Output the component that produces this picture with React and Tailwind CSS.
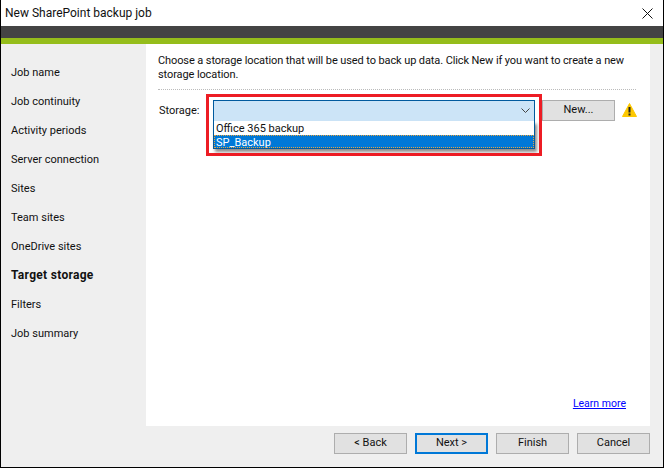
import React from 'react';

const STEPS = ['Job name', 'Job continuity', 'Activity periods', 'Server connection', 'Sites', 'Team sites', 'OneDrive sites', 'Target storage', 'Filters', 'Job summary'];

function WizardButton({ children, focused }) {
    return (
        <button className={`w-[73px] h-[21px] shrink-0 flex items-center justify-center bg-[#e1e1e1] text-[11px] text-[#111] ${focused ? 'border-2 border-[#0078d7]' : 'border border-[#adadad]'}`}>
            {children}
        </button>
    );
}

export default function App() {
    return (
        <div className="w-[664px] h-[468px] flex flex-col bg-white border-x border-b border-black overflow-hidden font-['Roboto',sans-serif] text-[11px] text-[#111]">
            <div className="h-[26px] flex items-center justify-between pl-1 pr-[10px] bg-white">
                <span className="text-[12px]">New SharePoint backup job</span>
                <svg width="11" height="11" viewBox="0 0 11 11" className="stroke-[#111]">
                    <path d="M0.5 0.5 L10.5 10.5 M10.5 0.5 L0.5 10.5" strokeWidth="1" />
                </svg>
            </div>
            <div className="h-3 bg-[#444444]" />
            <div className="h-[6px] bg-[#95bd1b]" />

            <div className="flex-1 flex bg-[#efefef]">
                <div className="w-[145px] shrink-0 flex flex-col pt-[14px] pl-[10px]">
                    {STEPS.map(step => (
                        <div key={step} className={`h-[29px] leading-[29px] ${step === 'Target storage' ? 'font-bold text-[12px] tracking-[0.3px]' : 'text-[11px]'}`}>
                            {step}
                        </div>
                    ))}
                </div>

                <div className="w-[504px] shrink-0 flex flex-col">
                    <div className="h-[382px] bg-white flex flex-col pl-3 pr-[14px] pt-[10px]">
                        <p className="leading-[14px] text-[11px] tracking-[-0.1px] m-0">
                            Choose a storage location that will be used to back up data. Click New if you want to create a new storage location.
                        </p>
                        <div className="mt-[7px] border-t border-dotted border-[#bbbbbb]" />
                        <div className="mt-[10px] flex items-start">
                            <span className="w-[55px] shrink-0 leading-[22px] pl-[1px]">Storage:</span>
                            <div className="relative w-[322px] shrink-0">
                                <div className="h-[22px] flex items-center justify-end pr-[4px] bg-[#cce4f7] border border-[#005a9e]">
                                    <svg width="9" height="6" viewBox="0 0 9 6" fill="none" stroke="#444">
                                        <path d="M0.5 0.5 L4.5 4.5 L8.5 0.5" />
                                    </svg>
                                </div>
                                <div className="absolute left-0 top-[21px] w-full bg-white border-x border-b border-[#005a9e] shadow-[2px_3px_3px_rgba(0,0,0,0.45)] z-10">
                                    <div className="h-[14px] leading-[16px] pl-[2px]">Office 365 backup</div>
                                    <div className="h-[13px] leading-[15px] pl-[2px] bg-[#0078d7] text-white outline-1 outline-dotted outline-[#e8a33d] -outline-offset-1">SP_Backup</div>
                                </div>
                                <div className="absolute -left-[7px] -top-[6px] w-[336px] h-[62px] border-[3px] border-[#ed1c24] z-20" />
                            </div>
                            <div className="ml-[7px]">
                                <WizardButton>New...</WizardButton>
                            </div>
                            <svg width="15" height="14" viewBox="0 0 15 14" className="ml-[7px] mt-[3px] shrink-0">
                                <path d="M7.5 0.5 L14.5 13.5 L0.5 13.5 Z" fill="#fdc800" stroke="#fdc800" strokeLinejoin="round" />
                                <rect x="6.5" y="4" width="2" height="5.5" fill="#222" />
                                <rect x="6.5" y="10.5" width="2" height="2" fill="#222" />
                            </svg>
                        </div>
                        <div className="mt-auto mb-[15px] flex justify-end pr-[10px]">
                            <a className="text-[10.5px] leading-[14px] text-[#0000ff] underline">Learn more</a>
                        </div>
                    </div>
                    <div className="flex-1 flex items-start justify-end gap-[8px] pt-[7px]">
                        <WizardButton>&lt; Back</WizardButton>
                        <WizardButton focused>Next &gt;</WizardButton>
                        <WizardButton>Finish</WizardButton>
                        <WizardButton>Cancel</WizardButton>
                    </div>
                </div>
            </div>
        </div>
    );
}
